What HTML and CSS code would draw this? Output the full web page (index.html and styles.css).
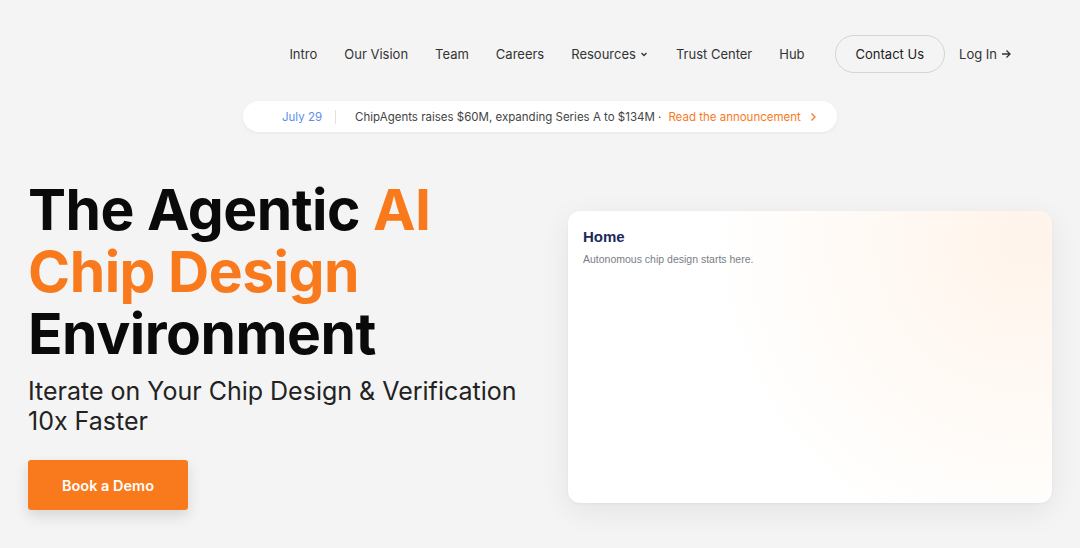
FILE: index.html
```html
<!DOCTYPE html>
<html lang="en">
<head>
  <meta charset="UTF-8">
  <title>ChipAgents - The Agentic AI Chip Design Environment</title>
  <meta name="viewport" content="width=device-width, initial-scale=1.0">
  <link rel="stylesheet" href="styles.css">
</head>
<body>
  <!-- Header -->
  <header class="site-header">
    <nav class="main-nav">
      <a href="#">Intro</a>
      <a href="#">Our Vision</a>
      <a href="#">Team</a>
      <a href="#">Careers</a>
      <a href="#" class="has-menu">Resources
        <svg viewBox="0 0 10 10" fill="none" stroke="currentColor" stroke-width="1.3"><path d="M2.5 4l2.5 2.5L7.5 4"/></svg>
      </a>
      <a href="#">Trust Center</a>
      <a href="#">Hub</a>
      <a href="#" class="contact-btn">Contact Us</a>
      <a href="#" class="login">Log In
        <svg viewBox="0 0 12 12" fill="none" stroke="currentColor" stroke-width="1.3"><path d="M2 6h8M6.5 2.5L10 6l-3.5 3.5"/></svg>
      </a>
    </nav>
  </header>

  <!-- Announcement -->
  <div class="announce-wrap">
    <a href="#" class="announce">
      <span class="announce-date">July 29</span>
      <span class="announce-sep"></span>
      <span class="announce-text">ChipAgents raises $60M, expanding Series A to $134M ·</span>
      <span class="announce-link">Read the announcement
        <svg viewBox="0 0 10 10" fill="none" stroke="currentColor" stroke-width="1.3"><path d="M3.5 1.5L7 5l-3.5 3.5"/></svg>
      </span>
    </a>
  </div>

  <!-- Hero -->
  <main class="hero">
    <section class="hero-copy">
      <h1>
        <span class="line">The Agentic <span class="accent">AI</span></span>
        <span class="line accent">Chip Design</span>
        <span class="line">Environment</span>
      </h1>
      <p class="subtitle">Iterate on Your Chip Design &amp; Verification<br>10x Faster</p>
      <a href="#" class="demo-btn">Book a Demo</a>
    </section>

    <section class="preview">
      <div class="preview-card">
        <h2>Home</h2>
        <p>Autonomous chip design starts here.</p>
      </div>
    </section>
  </main>
</body>
</html>
```

FILE: styles.css
```css
/* Reset */
* { margin: 0; padding: 0; box-sizing: border-box; }

:root {
  --bg-color: #f4f4f4;
  --text-color: #2b2b2b;
  --accent-color: #f97a1c;
  --date-color: #5b8def;
  --navy: #1c2b5a;
}

html, body {
  font-family: "Inter", "Noto Sans", sans-serif;
  background-color: var(--bg-color);
  color: var(--text-color);
  height: 100%;
  overflow: hidden;
}

a {
  color: inherit;
  text-decoration: none;
}

/* Header */
.site-header {
  display: flex;
  justify-content: flex-end;
  padding: 35px 68px 0 0;
}

.main-nav {
  display: flex;
  align-items: center;
  font-size: 13px;
  color: #333;
}

.main-nav a {
  display: inline-flex;
  align-items: center;
  margin-right: 27px;
}

.main-nav svg {
  width: 10px;
  height: 10px;
  margin-left: 3px;
}

.main-nav .login svg {
  width: 12px;
  height: 12px;
  margin-left: 3px;
}

.main-nav .contact-btn {
  height: 38px;
  padding: 0 20px;
  border: 1px solid #d4d4d4;
  border-radius: 19px;
  margin-left: 3px;
  margin-right: 14px;
  color: #222;
}

.main-nav .login {
  margin-right: 0;
}

/* Announcement */
.announce-wrap {
  display: flex;
  justify-content: center;
  padding: 28px 0 0 0;
}

.announce {
  display: flex;
  align-items: center;
  width: 594px;
  height: 31px;
  padding: 0 0 0 39px;
  background: #fff;
  border-radius: 16px;
  box-shadow: 0 1px 3px rgba(0, 0, 0, 0.06);
  font-size: 11.5px;
  color: #444;
}

.announce-date {
  color: var(--date-color);
}

.announce-sep {
  width: 1px;
  height: 14px;
  background: #e2e2e2;
  margin: 0 19px 0 13px;
}

.announce-link {
  display: inline-flex;
  align-items: center;
  color: var(--accent-color);
  margin-left: 7px;
}

.announce-link svg {
  width: 10px;
  height: 10px;
  margin-left: 7px;
}

/* Hero */
.hero {
  display: flex;
  justify-content: space-between;
  padding: 47px 28px 0 28px;
}

.hero-copy h1 {
  font-size: 57px;
  font-weight: 700;
  line-height: 62px;
  letter-spacing: -0.5px;
  color: #0a0a0a;
}

.hero-copy h1 .line {
  display: block;
}

.hero-copy .accent {
  color: var(--accent-color);
}

.subtitle {
  font-size: 25px;
  font-weight: 400;
  line-height: 30px;
  color: #222;
  margin-top: 11px;
}

.demo-btn {
  display: inline-flex;
  align-items: center;
  justify-content: center;
  width: 160px;
  height: 50px;
  margin-top: 24px;
  background: var(--accent-color);
  border-radius: 3px;
  color: #fff;
  font-size: 14.5px;
  font-weight: 600;
  box-shadow: 0 6px 14px rgba(0, 0, 0, 0.12);
}

/* Preview card */
.preview {
  padding-top: 32px;
}

.preview-card {
  width: 484px;
  height: 292px;
  padding: 17px 15px;
  border-radius: 12px;
  background:
    radial-gradient(circle at 95% 10%, rgba(255, 236, 220, 0.6), rgba(255, 255, 255, 0) 60%),
    #fff;
  box-shadow: 0 8px 30px rgba(0, 0, 0, 0.07), 0 1px 3px rgba(0, 0, 0, 0.04);
  font-family: "Liberation Sans", Arial, sans-serif;
}

.preview-card h2 {
  font-size: 15px;
  font-weight: 700;
  color: var(--navy);
}

.preview-card p {
  font-size: 10.5px;
  color: #7a7d85;
  margin-top: 8px;
}
```
